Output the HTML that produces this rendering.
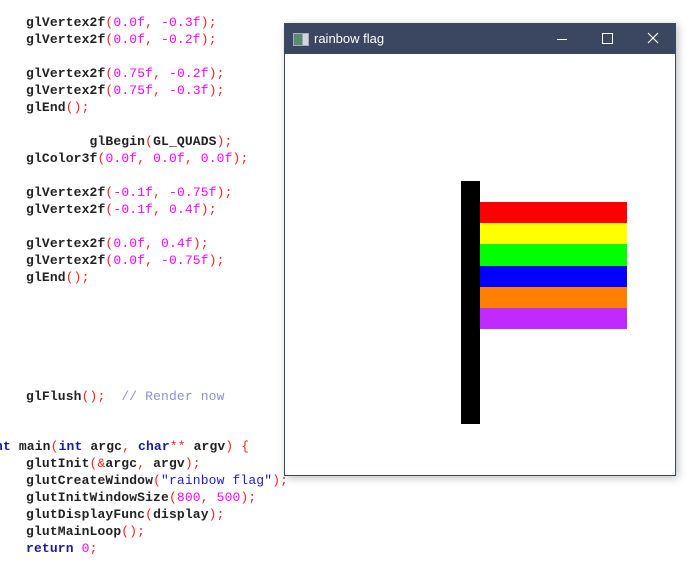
<!DOCTYPE html>
<html><head><style>
body{margin:0;width:691px;height:573px;background:#fff;position:relative;overflow:hidden;font-family:"Liberation Mono",monospace;}
.l{position:absolute;left:26px;font-size:13px;line-height:17px;white-space:pre;color:#222;font-weight:bold;letter-spacing:0.14px;margin-top:1px}
.p{color:#ff2020;font-weight:normal}
.n{color:#ff00ff;font-weight:normal}
.k{color:#1a1a9a}
.s{color:#1a1ad0;font-weight:normal}
.c{color:#9090d0;font-weight:normal}
.win{position:absolute;left:284px;top:23px;width:392px;height:453px;background:#fff;border:1px solid #3b4661;box-sizing:border-box;box-shadow:2px 2px 8px rgba(0,0,0,.25)}
.tb{position:absolute;left:0;top:0;right:0;height:30px;background:#3b4661;color:#fff;font-family:"Liberation Sans",sans-serif;font-size:12px}
.r{position:absolute}
</style></head><body>
<div class="l" style="top:13px">glVertex2f<span class="p">(</span><span class="n">0.0f</span><span class="p">,</span> <span class="n">-0.3f</span><span class="p">);</span></div>
<div class="l" style="top:30px">glVertex2f<span class="p">(</span><span class="n">0.0f</span><span class="p">,</span> <span class="n">-0.2f</span><span class="p">);</span></div>
<div class="l" style="top:64px">glVertex2f<span class="p">(</span><span class="n">0.75f</span><span class="p">,</span> <span class="n">-0.2f</span><span class="p">);</span></div>
<div class="l" style="top:81px">glVertex2f<span class="p">(</span><span class="n">0.75f</span><span class="p">,</span> <span class="n">-0.3f</span><span class="p">);</span></div>
<div class="l" style="top:98px">glEnd<span class="p">();</span></div>
<div class="l" style="top:132px">        glBegin<span class="p">(</span>GL_QUADS<span class="p">);</span></div>
<div class="l" style="top:149px">glColor3f<span class="p">(</span><span class="n">0.0f</span><span class="p">,</span> <span class="n">0.0f</span><span class="p">,</span> <span class="n">0.0f</span><span class="p">);</span></div>
<div class="l" style="top:183px">glVertex2f<span class="p">(</span><span class="n">-0.1f</span><span class="p">,</span> <span class="n">-0.75f</span><span class="p">);</span></div>
<div class="l" style="top:200px">glVertex2f<span class="p">(</span><span class="n">-0.1f</span><span class="p">,</span> <span class="n">0.4f</span><span class="p">);</span></div>
<div class="l" style="top:234px">glVertex2f<span class="p">(</span><span class="n">0.0f</span><span class="p">,</span> <span class="n">0.4f</span><span class="p">);</span></div>
<div class="l" style="top:251px">glVertex2f<span class="p">(</span><span class="n">0.0f</span><span class="p">,</span> <span class="n">-0.75f</span><span class="p">);</span></div>
<div class="l" style="top:268px">glEnd<span class="p">();</span></div>
<div class="l" style="top:387px">glFlush<span class="p">();</span>  <span class="c">// Render now</span></div>
<div class="l" style="top:437px;left:-5px"><span class="k">nt</span> main<span class="p">(</span><span class="k">int</span> argc<span class="p">,</span> <span class="k">char</span><span class="p">**</span> argv<span class="p">)</span> <span class="p">{</span></div>
<div class="l" style="top:454px">glutInit<span class="p">(&amp;</span>argc<span class="p">,</span> argv<span class="p">);</span></div>
<div class="l" style="top:471px">glutCreateWindow<span class="p">(</span><span class="s">"rainbow flag"</span><span class="p">);</span></div>
<div class="l" style="top:488px">glutInitWindowSize<span class="p">(</span><span class="n">800</span><span class="p">,</span> <span class="n">500</span><span class="p">);</span></div>
<div class="l" style="top:505px">glutDisplayFunc<span class="p">(</span>display<span class="p">);</span></div>
<div class="l" style="top:522px">glutMainLoop<span class="p">();</span></div>
<div class="l" style="top:539px"><span class="k">return</span> <span class="n">0</span><span class="p">;</span></div>
<div class="win">
 <div class="tb">
  <div class="r" style="left:8px;top:9px;width:14px;height:11px;background:linear-gradient(90deg,#5a8a70 0 60%,#cfd8e0 60%);border:1px solid #aab"></div>
  <div class="r" style="left:29px;top:7px;font-size:13px">rainbow flag</div>
  <div class="r" style="left:272px;top:15px;width:10px;height:1px;background:#fff"></div>
  <div class="r" style="left:317px;top:9px;width:9px;height:9px;border:1px solid #fff"></div>
  <svg class="r" style="left:362px;top:8px" width="12" height="12"><path d="M1 1L11 11M11 1L1 11" stroke="#fff" stroke-width="1.2"/></svg>
 </div>
</div>
<div class="r" style="left:461px;top:181px;width:19px;height:243px;background:#000"></div>
<div class="r" style="left:480px;top:202px;width:147px;height:21px;background:#ff0000"></div>
<div class="r" style="left:480px;top:223px;width:147px;height:21px;background:#ffff00"></div>
<div class="r" style="left:480px;top:244px;width:147px;height:22px;background:#00ff00"></div>
<div class="r" style="left:480px;top:266px;width:147px;height:21px;background:#0000ff"></div>
<div class="r" style="left:480px;top:287px;width:147px;height:21px;background:#ff8000"></div>
<div class="r" style="left:480px;top:308px;width:147px;height:21px;background:#bf2bff"></div>
</body></html>
